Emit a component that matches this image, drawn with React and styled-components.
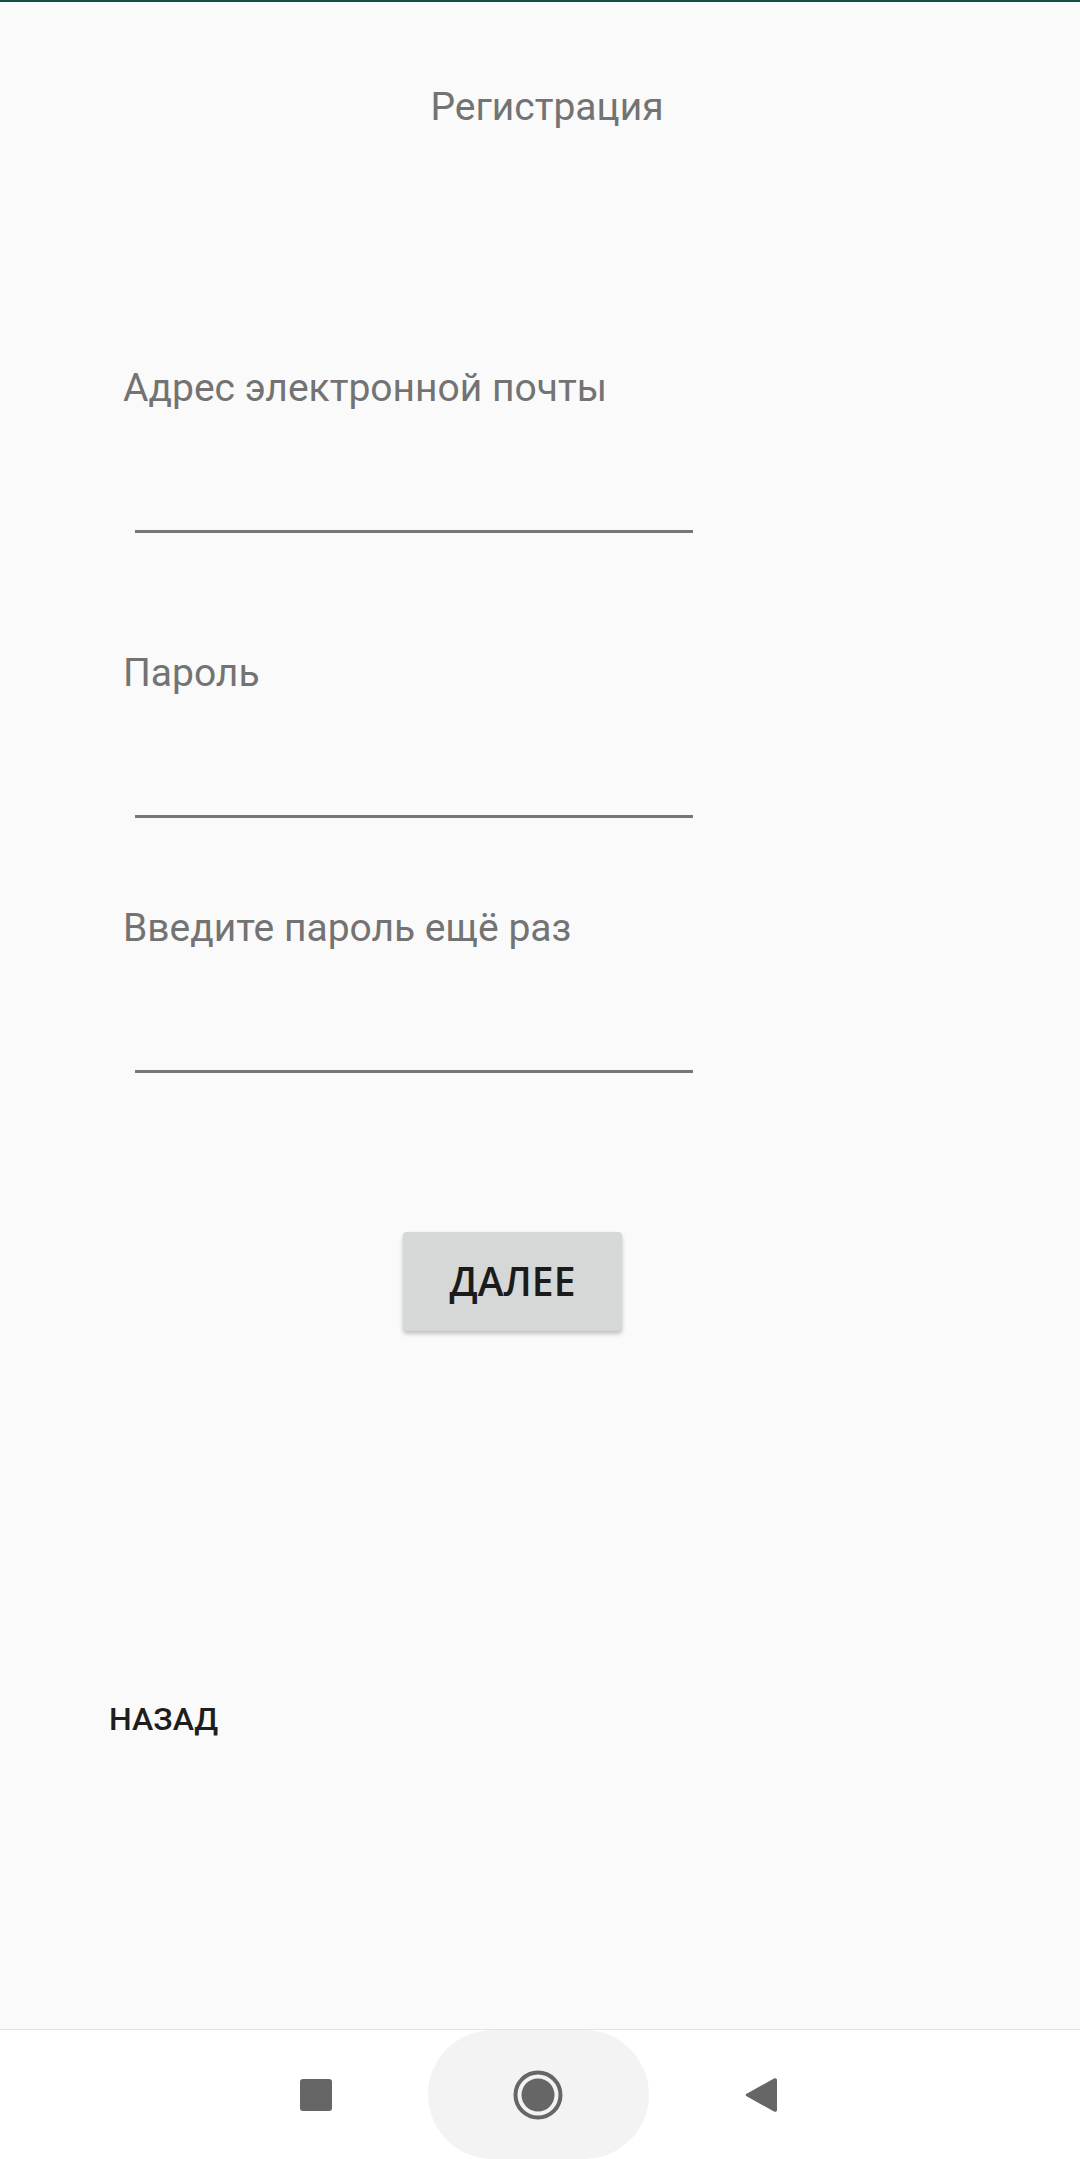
import React from "react";
import styled, { createGlobalStyle } from "styled-components";

const Global = createGlobalStyle`
  html, body { margin: 0; padding: 0; background: #fafafa; }
  * { box-sizing: border-box; }
`;

const Screen = styled.div`
  display: flex;
  flex-direction: column;
  width: 1080px;
  height: 2159px;
  background: #fafafa;
  font-family: Roboto, "Noto Sans", sans-serif;
`;

const StatusLine = styled.div`
  height: 2px;
  background: #124f45;
  flex: none;
`;

const Header = styled.h1`
  margin: 0;
  padding: 82px 0 0 14px;
  text-align: center;
  font-weight: 400;
  font-size: 39px;
  line-height: 46px;
  color: #737373;
`;

const Form = styled.div`
  display: flex;
  flex-direction: column;
  padding-left: 123px;
  margin-top: 235px;
`;

const Field = styled.div`
  display: flex;
  flex-direction: column;
  margin-top: ${(p) => p.$gap || 0}px;
`;

const Label = styled.label`
  font-size: 39px;
  line-height: 47px;
  color: #737373;
`;

const Underline = styled.div`
  margin-left: 12px;
  width: 558px;
  height: 121px;
  border-bottom: 3px solid #777777;
`;

const ButtonRow = styled.div`
  display: flex;
  justify-content: center;
  padding-right: 55px;
  margin-top: 159px;
`;

const Button = styled.button`
  width: 219px;
  height: 99px;
  border: none;
  border-radius: 4px;
  background: #d6d7d7;
  box-shadow: 0 3px 4px rgba(0, 0, 0, 0.22), 0 0 1px rgba(0, 0, 0, 0.08);
  padding: 26px 0 0 0;
  display: flex;
  justify-content: center;
  align-items: flex-start;
  font-family: "Open Sans", "Noto Sans", sans-serif;
  font-weight: 600;
  font-size: 39px;
  line-height: 46px;
  color: #1b1b1b;
`;

const BackLink = styled.div`
  margin-top: 370px;
  padding-left: 109px;
  font-weight: 500;
  font-size: 32px;
  line-height: 37px;
  color: #1e1e1e;
`;

const Spacer = styled.div`
  flex: 1;
`;

const NavBar = styled.div`
  flex: none;
  height: 130px;
  background: #ffffff;
  border-top: 1px solid #e3e3e3;
  display: flex;
  justify-content: center;
  align-items: center;
  gap: 96px;
  padding-right: 4px;
`;

const Pill = styled.div`
  align-self: stretch;
  width: 221px;
  border-radius: 66px;
  background: #f3f3f3;
  display: flex;
  align-items: center;
  justify-content: center;
`;

const IconBox = styled.div`
  width: ${(p) => p.$w}px;
  height: ${(p) => p.$h}px;
  display: flex;
  align-items: center;
  justify-content: center;
`;

const SquareIcon = () => (
  <IconBox $w={32} $h={32}>
    <svg width="32" height="32" viewBox="0 0 32 32">
      <rect x="0" y="0" width="32" height="32" rx="3" fill="#666666" />
    </svg>
  </IconBox>
);

const HomeIcon = () => (
  <IconBox $w={50} $h={50}>
    <svg width="50" height="50" viewBox="0 0 50 50">
      <circle cx="25" cy="25" r="22.5" fill="none" stroke="#666666" strokeWidth="4" />
      <circle cx="25" cy="25" r="16.5" fill="#666666" />
    </svg>
  </IconBox>
);

const BackIcon = () => (
  <IconBox $w={32} $h={36}>
    <svg width="32" height="36" viewBox="0 0 32 36">
      <path
        d="M29 1.5 C30.5 0.6 32 1.5 32 3 L32 33 C32 34.5 30.5 35.4 29 34.5 L1.6 19.3 C0.4 18.6 0.4 17.4 1.6 16.7 Z"
        fill="#666666"
      />
    </svg>
  </IconBox>
);

export default function App() {
  return (
    <>
      <Global />
      <Screen>
        <StatusLine />
        <Header>Регистрация</Header>
        <Form>
          <Field>
            <Label>Адрес электронной почты</Label>
            <Underline />
          </Field>
          <Field $gap={117}>
            <Label>Пароль</Label>
            <Underline />
          </Field>
          <Field $gap={87}>
            <Label>Введите пароль ещё раз</Label>
            <Underline />
          </Field>
        </Form>
        <ButtonRow>
          <Button>ДАЛЕЕ</Button>
        </ButtonRow>
        <BackLink>НАЗАД</BackLink>
        <Spacer />
        <NavBar>
          <SquareIcon />
          <Pill>
            <HomeIcon />
          </Pill>
          <BackIcon />
        </NavBar>
      </Screen>
    </>
  );
}
